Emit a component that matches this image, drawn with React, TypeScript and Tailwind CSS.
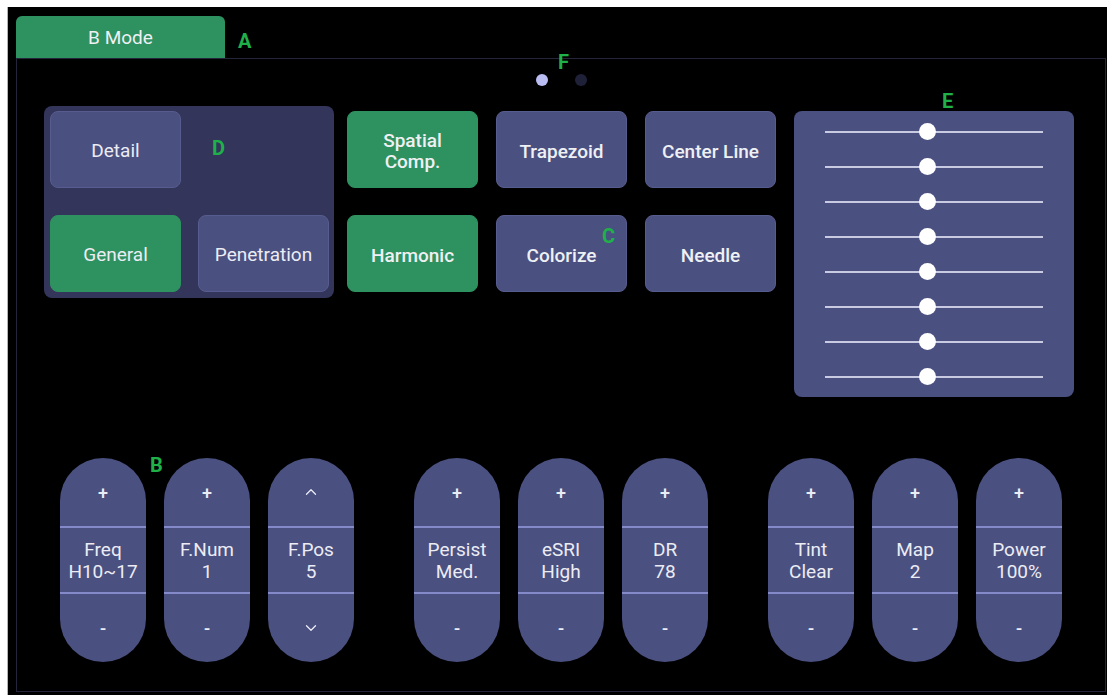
import React from 'react';
import { ChevronUp, ChevronDown } from 'lucide-react';

interface Knob {
  id: string;
  label: string;
  value: string;
  arrows?: boolean;
}

const knobGroups: Knob[][] = [
  [
    { id: 'freq', label: 'Freq', value: 'H10~17' },
    { id: 'fnum', label: 'F.Num', value: '1' },
    { id: 'fpos', label: 'F.Pos', value: '5', arrows: true },
  ],
  [
    { id: 'persist', label: 'Persist', value: 'Med.' },
    { id: 'esri', label: 'eSRI', value: 'High' },
    { id: 'dr', label: 'DR', value: '78' },
  ],
  [
    { id: 'tint', label: 'Tint', value: 'Clear' },
    { id: 'map', label: 'Map', value: '2' },
    { id: 'power', label: 'Power', value: '100%' },
  ],
];

const toggles = [
  { id: 'spatial', label: ['Spatial', 'Comp.'], on: true },
  { id: 'trapezoid', label: ['Trapezoid'], on: false },
  { id: 'center', label: ['Center Line'], on: false },
  { id: 'harmonic', label: ['Harmonic'], on: true },
  { id: 'colorize', label: ['Colorize'], on: false },
  { id: 'needle', label: ['Needle'], on: false },
];

// annotation letters sitting over the screen
const markers = [
  { id: 'A', className: 'left-[238px] top-[31px]' },
  { id: 'B', className: 'left-[150px] top-[455px]' },
  { id: 'C', className: 'left-[602px] top-[226px]' },
  { id: 'D', className: 'left-[212px] top-[138px]' },
  { id: 'E', className: 'left-[942px] top-[91px]' },
  { id: 'F', className: 'left-[558px] top-[52px]' },
];

function PresetButton({ label, on }: { label: string; on?: boolean }) {
  return (
    <div
      className={`h-[77px] rounded-[8px] flex items-center justify-center pt-[4px] text-[19px] text-[#ececf4] border ${
        on ? 'bg-[#2e9160] border-[#2e9160]' : 'bg-[#4a5080] border-[#575c8e]'
      }`}
    >
      {label}
    </div>
  );
}

function KnobPill({ knob }: { knob: Knob }) {
  return (
    <div className="w-[86px] h-[204px] rounded-[43px] bg-[#4a5080] flex flex-col overflow-hidden text-[#ececf4]">
      <div className="h-[68px] flex items-center justify-center text-[18px] font-medium">
        {knob.arrows ? <ChevronUp size={18} strokeWidth={1.75} /> : '+'}
      </div>
      <div className="h-[2px] bg-[#8489c9]" />
      <div className="h-[64px] flex flex-col items-center justify-center pt-[1px] text-[19px] leading-[22px]">
        <span>{knob.label}</span>
        <span>{knob.value}</span>
      </div>
      <div className="h-[2px] bg-[#8489c9]" />
      <div className="flex-1 flex items-center justify-center text-[18px] font-medium">
        {knob.arrows ? <ChevronDown size={18} strokeWidth={1.75} /> : '-'}
      </div>
    </div>
  );
}

function Slider() {
  return (
    <div className="h-[17px] flex items-center">
      <div className="relative w-[218px] h-[2px] bg-[#c9cbe2]">
        <div className="absolute left-[94px] -top-[7.5px] w-[17px] h-[17px] rounded-full bg-white" />
      </div>
    </div>
  );
}

export default function App() {
  return (
    <div className="relative w-[1107px] h-[695px] bg-white pt-[7px] pl-[7px] font-['Roboto',sans-serif] overflow-hidden">
      <div className="h-full bg-black border-l border-[#b4b4b4] pl-[8px] pt-[9px] flex flex-col">
        <div className="w-[209px] h-[42px] shrink-0 rounded-t-[6px] bg-[#2e9160] flex items-center justify-center pt-[3px] text-[19px] text-[#eef0f4]">
          B Mode
        </div>

        <div className="flex-1 mr-[1px] mb-[3px] border border-[#24243a] flex flex-col">
          <div className="mt-[15px] flex justify-center gap-[27px]">
            <span className="w-[12px] h-[12px] rounded-full bg-[#b9bdf2]" />
            <span className="w-[12px] h-[12px] rounded-full bg-[#1f2139]" />
          </div>

          <div className="mt-[20px] pl-[27px] flex items-start">
            <div className="w-[290px] h-[192px] rounded-[8px] bg-[#33355a] pt-[5px] pl-[6px] pr-[5px] grid grid-cols-2 gap-x-[17px] gap-y-[27px] content-start">
              <PresetButton label="Detail" />
              <div />
              <PresetButton label="General" on />
              <PresetButton label="Penetration" />
            </div>

            <div className="ml-[13px] mt-[5px] grid grid-cols-[131px_131px_131px] gap-x-[18px] gap-y-[27px]">
              {toggles.map((t) => (
                <div
                  key={t.id}
                  className={`h-[77px] rounded-[8px] flex flex-col items-center justify-center pt-[3px] text-[19px] leading-[21px] font-medium text-[#eef0f4] border ${
                    t.on ? 'bg-[#2e9160] border-[#2e9160]' : 'bg-[#4a5080] border-[#575c8e]'
                  }`}
                >
                  {t.label.map((l) => (
                    <span key={l}>{l}</span>
                  ))}
                </div>
              ))}
            </div>

            <div className="ml-[18px] mt-[5px] w-[280px] h-[286px] rounded-[8px] bg-[#4a5080] py-[12px] flex flex-col items-center justify-between">
              {Array.from({ length: 8 }).map((_, i) => (
                <Slider key={i} />
              ))}
            </div>
          </div>

          <div className="mt-[61px] pl-[43px] flex gap-[60px]">
            {knobGroups.map((group, gi) => (
              <div key={gi} className="flex gap-[18px]">
                {group.map((k) => (
                  <KnobPill key={k.id} knob={k} />
                ))}
              </div>
            ))}
          </div>
        </div>
      </div>

      {markers.map((m) => (
        <span
          key={m.id}
          className={`absolute ${m.className} text-[20px] leading-none font-bold text-[#1fb04a]`}
        >
          {m.id}
        </span>
      ))}
    </div>
  );
}
